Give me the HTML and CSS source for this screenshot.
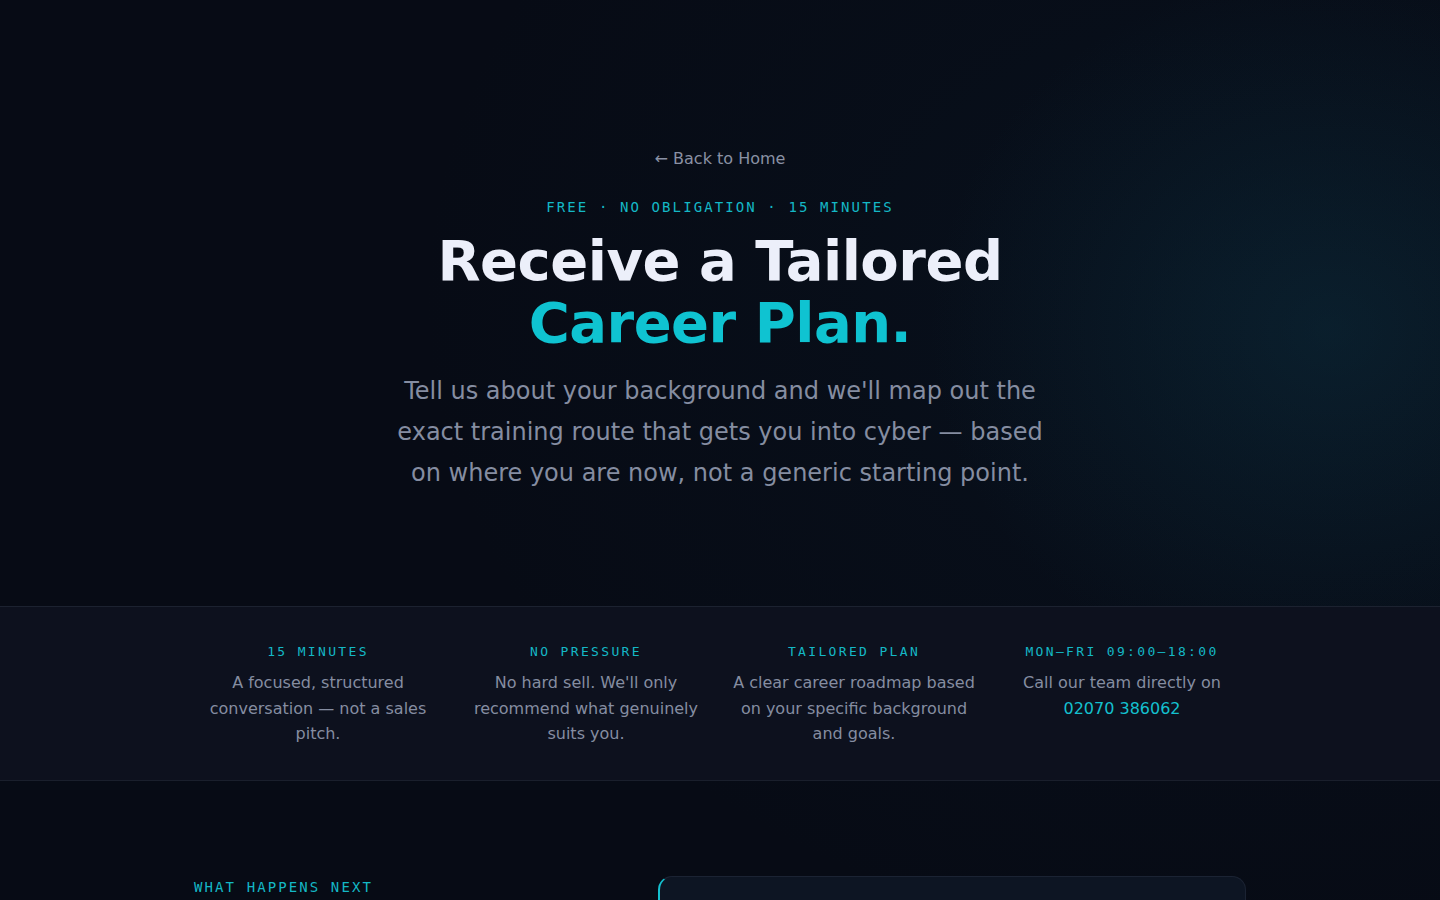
FILE: index.html
```html
<!DOCTYPE html>
<html lang="en">
<head>
<meta charset="utf-8">
<title>Receive a Tailored Career Plan</title>
<link rel="stylesheet" href="styles.css">
</head>
<body>
<main class="page">
  <section class="hero">
    <a class="back-link" href="#">← Back to Home</a>
    <p class="eyebrow">FREE · NO OBLIGATION · 15 MINUTES</p>
    <h1 class="hero-title">Receive a Tailored<br><span class="accent">Career Plan.</span></h1>
    <p class="hero-lead">Tell us about your background and we'll map out the exact training route that gets you into cyber — based on where you are now, not a generic starting point.</p>
  </section>

  <section class="strip">
    <div class="container strip-grid">
      <div class="strip-item">
        <h3 class="strip-label">15 MINUTES</h3>
        <p class="strip-text">A focused, structured conversation — not a sales pitch.</p>
      </div>
      <div class="strip-item">
        <h3 class="strip-label">NO PRESSURE</h3>
        <p class="strip-text">No hard sell. We'll only recommend what genuinely suits you.</p>
      </div>
      <div class="strip-item">
        <h3 class="strip-label">TAILORED PLAN</h3>
        <p class="strip-text">A clear career roadmap based on your specific background and goals.</p>
      </div>
      <div class="strip-item">
        <h3 class="strip-label">MON–FRI 09:00–18:00</h3>
        <p class="strip-text">Call our team directly on<br><a class="phone" href="#">02070 386062</a></p>
      </div>
    </div>
  </section>

  <section class="next">
    <div class="container next-grid">
      <div class="next-info">
        <p class="section-label">WHAT HAPPENS NEXT</p>
      </div>
      <div class="form-card">
        <div class="form-inner"></div>
      </div>
    </div>
  </section>
</main>
</body>
</html>
```

FILE: styles.css
```css
* { box-sizing: border-box; }

html, body {
  margin: 0;
  padding: 0;
}

body {
  background-color: #070b15;
  background-image:
    radial-gradient(ellipse 400px 360px at 1330px 330px, rgba(16, 70, 90, 0.28), rgba(16, 70, 90, 0) 100%),
    radial-gradient(ellipse 800px 650px at 1220px 300px, rgba(12, 40, 60, 0.18), rgba(12, 40, 60, 0) 100%);
  background-repeat: no-repeat;
  color: #8a91a4;
  font-family: "DejaVu Sans", "Liberation Sans", sans-serif;
}

a { text-decoration: none; }

.container {
  max-width: 1100px;
  margin: 0 auto;
  padding: 0 24px;
}

/* Hero */
.hero {
  display: flex;
  flex-direction: column;
  align-items: center;
  text-align: center;
  padding: 147px 24px 112px;
}

.back-link {
  font-size: 16px;
  line-height: 24px;
  color: #8a91a4;
}

.eyebrow {
  margin: 26px 0 0;
  font-family: "DejaVu Sans Mono", "Liberation Mono", monospace;
  font-size: 14px;
  line-height: 21px;
  letter-spacing: 0.15em;
  color: #14b8c6;
}

.hero-title {
  margin: 12px 0 0;
  font-size: 56px;
  font-weight: 700;
  line-height: 1.1;
  letter-spacing: -0.5px;
  color: #eceffa;
}

.accent { color: #0fc3d1; }

.hero-lead {
  margin: 18px 0 0;
  max-width: 660px;
  font-size: 24px;
  line-height: 41px;
  color: #858da1;
}

/* Strip */
.strip {
  background: #0d111e;
  border-top: 1px solid #1c2230;
  border-bottom: 1px solid #1a1f2c;
  padding: 37px 0 33px;
}

.strip-grid {
  display: grid;
  grid-template-columns: repeat(4, 1fr);
  gap: 20px;
}

.strip-item { text-align: center; }

.strip-label {
  margin: 0 0 10px;
  font-family: "DejaVu Sans Mono", "Liberation Mono", monospace;
  font-size: 13px;
  font-weight: 400;
  line-height: 16px;
  letter-spacing: 0.18em;
  color: #14b8c6;
}

.strip-text {
  margin: 0;
  font-size: 16px;
  line-height: 1.6;
  color: #858da1;
}

.phone { color: #14c0cf; }

/* Next section */
.next {
  padding: 95px 0 120px;
}

.next-grid {
  display: grid;
  grid-template-columns: 2fr 3fr;
  gap: 72px;
  align-items: start;
}

.section-label {
  margin: 1px 0 0;
  font-family: "DejaVu Sans Mono", "Liberation Mono", monospace;
  font-size: 14px;
  line-height: 21px;
  letter-spacing: 0.15em;
  color: #14b8c6;
}

.form-card {
  min-height: 520px;
  background: #0d1523;
  border: 1px solid #1b2333;
  border-left: 2px solid #14c0cf;
  border-radius: 14px;
}
```
